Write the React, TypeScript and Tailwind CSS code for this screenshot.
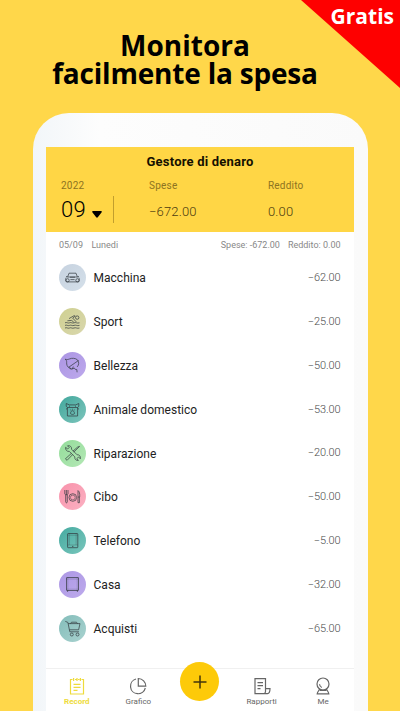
import React, { useState } from 'react';

interface Expense {
  name: string;
  amount: string;
  circle: string;
  icon: React.ReactNode;
}

interface TabButtonProps {
  label: string;
  active?: boolean;
  onClick: () => void;
  children: React.ReactNode;
}

const expenses: Expense[] = [
  {
    name: 'Macchina',
    amount: '−62.00',
    circle: 'bg-linear-to-br from-[#c6d2df] to-[#d5e0ea]',
    icon: (
      <>
        <path d="M8.6 13 10 9.2h7l1.4 3.8M7 12.4l1.6.6h9.8l1.6-.6M7.2 13.6c-.8 1.2-.8 3 .1 4.3h12.4c.9-1.3.9-3.1.1-4.3" />
        <path d="M11 13.2h5M11.4 15.6h4.2" />
        <circle cx="8.6" cy="16.3" r="1.6" />
        <circle cx="18.4" cy="16.3" r="1.6" />
      </>
    ),
  },
  {
    name: 'Sport',
    amount: '−25.00',
    circle: 'bg-linear-to-br from-[#cfd091] to-[#d9d7ad]',
    icon: (
      <>
        <path d="m8.4 12.8 4.2-.4 2.2 1.8M10 10.6l5.2-3 1 .5-2.5 2 3.6 3.8" />
        <circle cx="18.2" cy="9.6" r="1.7" />
        <path d="M6 14.8c1.8-1 2.7.9 4.5 0s2.7.9 4.5 0 3 .9 5.5 0M6 17.4c1.8-1 2.7.9 4.5 0s2.7.9 4.5 0 3 .9 5.5 0M6 20c1.8-1 2.7.9 4.5 0s2.7.9 4.5 0 3 .9 5.5 0" />
      </>
    ),
  },
  {
    name: 'Bellezza',
    amount: '−50.00',
    circle: 'bg-linear-to-br from-[#ab95e3] to-[#bda9ec]',
    icon: (
      <>
        <path d="M6.2 7.2c2 .6 3 .3 4.2-.2 2.4-1.2 6-.9 8 .8 1.8 2 1.7 5-.2 7.1M6.2 7.2c2 1.3 1.3 3.3 1.5 4.8.3 2.4 1.9 4.1 4.4 4.5" />
        <path d="m19.5 8.5-9.7 6.7M10.5 15.4l1.2 1.8 1.9-.7.7-2M12.7 17.1l2.7-1 .9 1.3 1.5.1.3 2.8" />
      </>
    ),
  },
  {
    name: 'Animale domestico',
    amount: '−53.00',
    circle: 'bg-linear-to-br from-[#3fa79c] to-[#7cc5bc]',
    icon: (
      <>
        <path d="M7.2 10.2V7.5l3.2 1.4h6.2l3.2-1.4v2.7l-1.2 1.3M7.2 10.2l1.2 1.3M8.4 11.5v8.5h10.200v-8.5zM7 13.2l1.4-.8M20 13.2l-1.4-.8M10 10.2h1M16 10.2h1" />
        <path d="M11.6 17.7c-.2-2 1-3 1.9-3s2.1 1 1.9 3c-1 1-2.8 1-3.8 0zM11.6 14.3v-.7M13.5 13.6v-.8M15.4 14.3v-.7" />
      </>
    ),
  },
  {
    name: 'Riparazione',
    amount: '−20.00',
    circle: 'bg-linear-to-br from-[#93dc9a] to-[#b4e8b5]',
    icon: (
      <>
        <path d="M6.6 7.3 8.7 9l1.5-1.5L8.5 5.8c2.3-.7 4.5 1 4.1 3.5l5.5 5.5c2.2-.4 3.9 1.6 3.2 4l-1.7-1.8-1.8 1.6 1.6 1.8c-2.2.5-4-1.3-3.6-3.5l-5.5-5.5C8.1 11.9 6.1 9.7 6.6 7.3z" />
        <path d="m20.6 6.4-5.8 5.7M20.6 6.4l-1.9.6-4.8 4.2M12.4 13.4l-6 5.4 1.7 1.5 5.6-5.8" />
      </>
    ),
  },
  {
    name: 'Cibo',
    amount: '−50.00',
    circle: 'bg-linear-to-br from-[#f892ab] to-[#fbb1c2]',
    icon: (
      <>
        <path d="M5.8 7v4c0 1 3.2 1 3.2 0V7M7.4 7v5M6.7 12v6.8c0 1.4 1.6 1.4 1.6 0V12" />
        <circle cx="13.8" cy="14.5" r="3.8" />
        <circle cx="13.8" cy="14.5" r="2.4" strokeWidth=".5" />
        <path d="M19 19.7V7.6c1.5 1 1.9 3.1 1.7 6.4H19M20.4 14v5.7H19" />
      </>
    ),
  },
  {
    name: 'Telefono',
    amount: '−5.00',
    circle: 'bg-linear-to-br from-[#43aaa0] to-[#79c6bc]',
    icon: (
      <>
        <rect x="8.6" y="6.5" width="10.2" height="14.2" rx=".6" />
        <path d="M10.3 6.5v11.5M17.1 6.5v11.5M8.6 18h10.2M8.6 8.2h10.2" strokeWidth=".25" />
        <path d="M13 19.4h1.4" />
      </>
    ),
  },
  {
    name: 'Casa',
    amount: '−32.00',
    circle: 'bg-linear-to-br from-[#ac97e4] to-[#bdaaec]',
    icon: (
      <>
        <rect x="7.5" y="6.5" width="12" height="13" rx=".4" />
        <path d="M7.5 8h12M7.5 18.2h12M8.8 6.5v13M18.2 6.5v13" strokeWidth=".2" />
        <path d="M8.6 19.5v1.4M18.4 19.500v1.4" />
      </>
    ),
  },
  {
    name: 'Acquisti',
    amount: '−65.00',
    circle: 'bg-linear-to-br from-[#83bdba] to-[#a9d2cf]',
    icon: (
      <>
        <path d="M6.3 6.4l2.6 1 1.9 9.4h9.2M9.2 8.6h11.8l-1.4 6.2h-9.1M11.5 8.6l1-1.4h5l1 1.4" />
        <circle cx="12.8" cy="19.5" r="1.5" />
        <circle cx="18.5" cy="19.5" r="1.5" />
      </>
    ),
  },
];

const TabButton: React.FC<TabButtonProps> = ({ label, active, onClick, children }) => (
  <button
    onClick={onClick}
    className={`flex flex-1 flex-col items-center pt-[7px] ${
      active ? 'font-bold text-[#eedb3c]' : 'text-[#666]'
    }`}
  >
    <svg className="h-5 w-5" viewBox="0 0 20 20" fill="none" stroke="currentColor" strokeWidth="1.2">
      {children}
    </svg>
    <span className="mt-px text-[8px] leading-[10px]">{label}</span>
  </button>
);

const App: React.FC = () => {
  const [tab, setTab] = useState('Record');

  return (
    <div className="relative flex h-[711px] w-[400px] flex-col items-center overflow-hidden bg-[#ffd74a] font-[Roboto,sans-serif]">
      {/* Corner ribbon */}
      <svg className="absolute top-0 right-0 h-[88px] w-[99px]" viewBox="0 0 99 88">
        <path d="M0 0h99v88z" fill="#fe0000" />
      </svg>
      <span className="absolute top-[2px] right-[6px] font-['Open_Sans',sans-serif] text-[21px] leading-[28px] font-bold text-white">
        Gratis
      </span>

      <h1 className="flex h-[113px] w-full shrink-0 flex-col pt-[31px] pr-[30px] text-center font-['Open_Sans',sans-serif] text-[28px] leading-[28px] font-bold text-black">
        <span>Monitora</span>
        <span className="tracking-[-0.2px]">facilmente la spesa</span>
      </h1>

      {/* Phone */}
      <div className="ml-px flex min-h-0 w-[335px] flex-1 flex-col rounded-t-[36px] bg-linear-to-r from-[#f2f6f9] via-[#fdfdfd] via-20% to-[#fafafa] pt-[34px] pr-[14px] pl-[13px]">
        <div className="flex min-h-0 flex-1 flex-col bg-white">
          <header className="h-[85px] shrink-0 bg-[#ffd645] pt-[6px]">
            <h2 className="text-center text-[13px] leading-[18px] font-bold tracking-[0.2px] text-[#151000]">
              Gestore di denaro
            </h2>
            <div className="flex pt-[9px] pl-[15px]">
              <div className="w-[88px]">
                <p className="text-[10px] leading-3 tracking-[0.2px] text-[#8d7321]">2022</p>
                <div className="mt-[4px] flex h-[27px] w-[53px] items-center border-r border-[#c29f2d]">
                  <span className="text-[22px] leading-[26px] font-[350] tracking-[0.3px]">09</span>
                  <svg className="mt-[9px] ml-[6px] h-[7px] w-[10px]" viewBox="0 0 10 7">
                    <path d="M1 0h8c1 0 1 .8.5 1.4L5.8 6.3q-.8.8-1.6 0L.5 1.4C0 .8 0 0 1 0z" fill="#000" />
                  </svg>
                </div>
              </div>
              <div className="w-[119px]">
                <p className="text-[10px] leading-3 tracking-[0.25px] text-[#8d7321]">Spese</p>
                <p className="mt-[12px] text-[13px] leading-4 font-light tracking-[0.15px] text-[#4c3c10]">−672.00</p>
              </div>
              <div>
                <p className="text-[10px] leading-3 tracking-[0.2px] text-[#8d7321]">Reddito</p>
                <p className="mt-[12px] text-[13px] leading-4 font-light tracking-[0.15px] text-[#4c3c10]">0.00</p>
              </div>
            </div>
          </header>

          <div className="flex h-[24px] shrink-0 items-center pr-[13.5px] pl-[13px] pt-[3px] text-[9px] text-[#888]">
            <span>05/09</span>
            <span className="ml-[8.5px]">Lunedi</span>
            <span className="ml-auto">Spese: -672.00</span>
            <span className="ml-[8px]">Reddito: 0.00</span>
          </div>

          <ul className="shrink-0">
            {expenses.map((item) => (
              <li key={item.name} className="flex h-[43.8px] items-center pr-[13.5px] pl-[13px]">
                <div className={`h-[27px] w-[27px] rounded-full ${item.circle}`}>
                  <svg
                    className="h-[27px] w-[27px]"
                    viewBox="0 0 27 27"
                    fill="none"
                    stroke="#30383d"
                    strokeWidth=".7"
                    strokeLinejoin="round"
                  >
                    {item.icon}
                  </svg>
                </div>
                <span className="ml-[7.5px] pt-px text-[12px] tracking-[0.02px] text-[#222]">{item.name}</span>
                <span className="ml-auto pt-px text-[11px] font-light tracking-[-0.1px] text-[#4a4a4a]">{item.amount}</span>
              </li>
            ))}
          </ul>

          {/* Bottom navigation */}
          <nav className="mt-auto flex h-[43px] shrink-0 border-t border-[#f0f0f0] bg-white">
            <TabButton label="Record" active={tab === 'Record'} onClick={() => setTab('Record')}>
              <path d="M5.5 3.5H3.5v14.5h13V3.5h-2M8 3.5h1.5M11 3.5h1.5M6.6 2v3M10 2v3M13.4 2v3M6.5 8.3h7M6.5 11.3h7M6.5 14.3h4" />
            </TabButton>
            <TabButton label="Grafico" active={tab === 'Grafico'} onClick={() => setTab('Grafico')}>
              <path d="M8 3A7.5 7.5 0 1 0 17.3 12" />
              <path d="M10.3 2.5V10.2h7.5A7.6 7.6 0 0 0 10.3 2.5z" />
            </TabButton>
            <div className="flex flex-1 justify-center">
              <button className="mt-[-7px] flex h-[39px] w-[39px] items-center justify-center rounded-full bg-[#fdca09]">
                <svg className="h-[14px] w-[14px]" viewBox="0 0 14 14" stroke="#41350b" strokeWidth="1.5">
                  <path d="M7 .5v13M.5 7h13" />
                </svg>
              </button>
            </div>
            <TabButton label="Rapporti" active={tab === 'Rapporti'} onClick={() => setTab('Rapporti')}>
              <path d="M13.5 12.5V2.6H3v15h12.5c2 0 2.5-1.5 2.5-5h-4.5v3c0 1.2-.6 2-1.5 2M5.5 6.7h5.5M5.5 9.7h5.5M5.5 12.7h3" />
            </TabButton>
            <TabButton label="Me" active={tab === 'Me'} onClick={() => setTab('Me')}>
              <circle cx="10" cy="8" r="6" />
              <path d="M6.5 13c-.2 1.5-2 2.3-2.3 4.8h11.6c-.3-2.5-2.1-3.3-2.3-4.8M6.8 14.3h6.4M6.5 8.3c.2 1.7 1 2.6 2.3 3.2" />
            </TabButton>
          </nav>
        </div>
      </div>
    </div>
  );
};

export default App;
